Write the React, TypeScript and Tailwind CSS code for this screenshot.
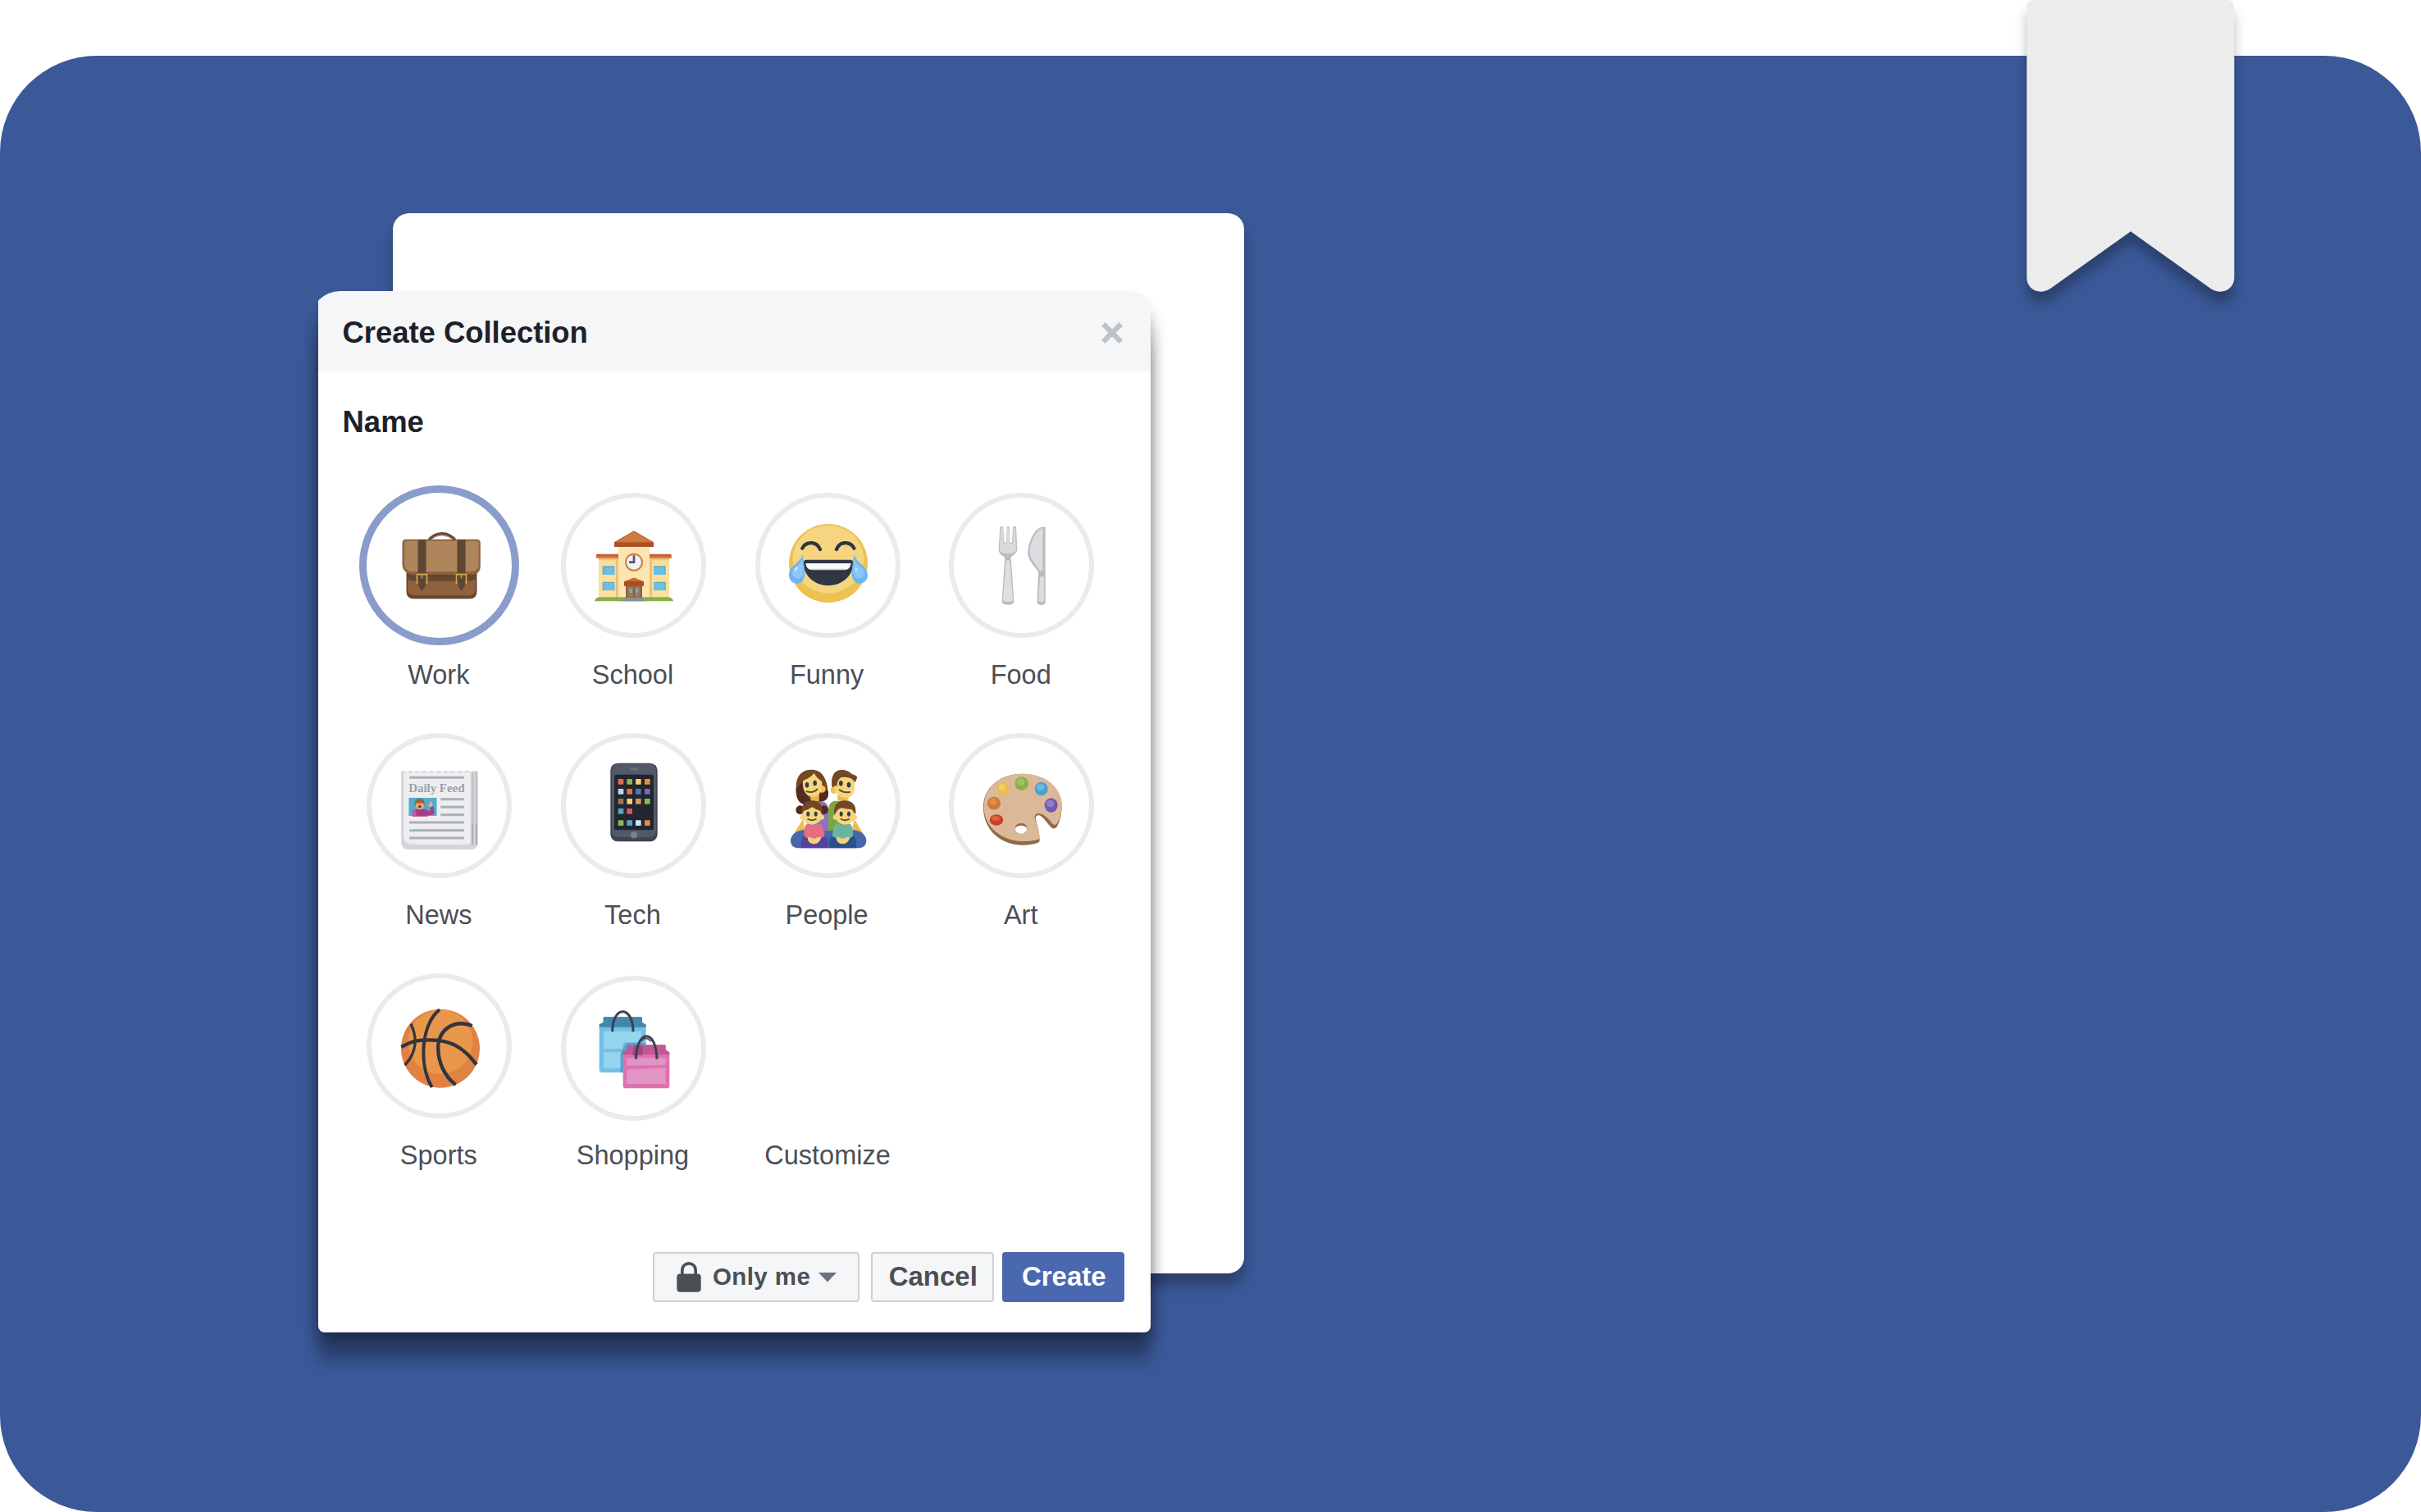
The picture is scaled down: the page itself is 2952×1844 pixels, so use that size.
import React from "react";

type IconProps = { x: number; y: number; children: React.ReactNode };

// Each drawing uses a 300-unit square around its circle's centre, shown at 100px.
function Emoji({ x, y, children }: IconProps) {
  return (
    <svg
      className="h-[100px] w-[100px] overflow-visible"
      viewBox={`${x - 150} ${y - 150} 300 300`}
      fill="none"
      aria-hidden="true"
    >
      {children}
    </svg>
  );
}

function Briefcase() {
  return (
    <Emoji x={345.5} y={358}>
      <path d="M303 268C330 232 376 230 406 268" stroke="#6b4a33" strokeWidth="10" />
      <path d="M311 263C336 243 370 243 397 263" stroke="#8d6e53" strokeWidth="2" />
      <path d="M224 370h258v82q0 27-27 27h-204q-27 0-27-27z" fill="#654630" />
      <path d="M229 375h248v68q0 24-24 24h-200q-24 0-24-24z" fill="#90613f" />
      <path d="M226 376h254v26q-12 12-32 12H258q-22 0-32-12z" fill="#654630" />
      <path d="M209 275q0-14 14-14h258q14 0 14 14v84q0 31-31 31H243q-34-6-34-37z" fill="#8d6340" />
      <path d="M217 275q0-8 9-8h252q10 0 10 8v78q0 26-24 26H243q-26-3-26-28z" fill="#af855b" />
      {[281, 425].map((cx) => (
        <g key={cx}>
          <path d={`M${cx - 15} 262h30v123h-30z`} fill="#5d4632" />
          <path d={`M${cx - 13} 392h26v40l-13 19-13-19z`} fill="#5d4632" />
          <path d={`M${cx - 18} 424v-34h36v34`} stroke="#d3a548" strokeWidth="5" />
          <path d={`M${cx} 388v16`} stroke="#c8963f" strokeWidth="5" />
        </g>
      ))}
    </Emoji>
  );
}

function School() {
  return (
    <Emoji x={1056} y={358}>
      <path d="M930 330h258v146H930z" fill="#fae09a" />
      <path d="M993 330h10v146h-10zM1115 330h10v146h-10z" fill="#edc07c" />
      <path d="M1002 285h114v191h-114z" fill="#fce5ae" />
      <path d="M930 330h64v8h-64zM1124 330h64v8h-64z" fill="#efc37c" />
      <path d="M921 318q0-3 3-3h78v16h-81zM1116 315h77q3 0 3 3v13h-80z" fill="#c4622f" />
      <path d="M921 324h81v7h-81zM1116 324h80v7h-80z" fill="#d28050" />
      <path d="M987 272l70-41h4l70 41v17H987z" fill="#ad5126" />
      <path d="M991 272l66-38h4l66 38z" fill="#cf7b3f" />
      <circle cx="1059" cy="345" r="33" fill="#cd7c4c" />
      <circle cx="1059" cy="345" r="27" fill="#f1f2f7" />
      <path d="M1059 320v25h-18" stroke="#4f596b" strokeWidth="8" />
      {[359, 417].map((y) => (
        <g key={y}>
          <path d={`M944 ${y}h44v31h-44zM1131 ${y}h44v31h-44z`} fill="#5aa8cc" />
          <path d={`M948 ${y + 4}h40v27h-40zM1131 ${y + 4}h40v27h-40z`} fill="#6cc0e4" />
        </g>
      ))}
      <path d="M915 488q3-15 20-15h248q17 0 20 15z" fill="#86b04a" />
      <path d="M1016 488q4-10 16-14h54q12 4 16 14z" fill="#8b919b" />
      <path d="M1029 430h60v45h-60z" fill="#8a6142" />
      <path d="M1036 434h20v40h-20zM1062 434h20v40h-20z" fill="#a2764d" />
      <path d="M1043 441h10v16h-10zM1065 441h10v16h-10z" fill="#69aec2" />
      <path d="M1023 416l34-14h4l34 14v16h-72z" fill="#a94c25" />
      <path d="M1026 415l32-13 32 13z" fill="#c66c38" />
    </Emoji>
  );
}

function Joy() {
  return (
    <Emoji x={326} y={358}>
      <circle cx="329" cy="349" r="144" fill="#edc252" />
      <ellipse cx="329" cy="334" rx="130" ry="124" fill="#f5d580" />
      <path d="M234 294c11-23 50-30 65 4M423 294c-11-23-50-30-64 4" stroke="#2e3542" strokeWidth="13" strokeLinecap="round" />
      <path d="M248 336h161q11 0 11 12c0 44-39 82-91 82s-91-38-91-82q0-12 10-12z" fill="#2f3644" />
      <path d="M246 349h166c-2 16-10 24-23 24H269c-13 0-21-8-23-24z" fill="#f7f8fa" />
      <path d="M264 369h130l-6 5H270z" fill="#c9ccd1" />
      <g>
        <path d="M236 317c1 28 7 42 7 67 0 24-11 39-28 39s-30-12-30-31c0-32 37-41 51-75z" fill="#6fb4f0" />
        <path d="M234 334c1 20 4 32 4 48 0 14-9 22-21 22s-20-8-20-20c0-20 26-25 37-50z" fill="#8cc5f7" />
        <ellipse cx="211" cy="370" rx="5" ry="9" fill="#c5e4fb" transform="rotate(35 211 370)" />
      </g>
      <g transform="translate(658 0) scale(-1 1)">
        <path d="M236 317c1 28 7 42 7 67 0 24-11 39-28 39s-30-12-30-31c0-32 37-41 51-75z" fill="#6fb4f0" />
        <path d="M234 334c1 20 4 32 4 48 0 14-9 22-21 22s-20-8-20-20c0-20 26-25 37-50z" fill="#8cc5f7" />
        <ellipse cx="227" cy="371" rx="4" ry="8" fill="#c5e4fb" />
      </g>
    </Emoji>
  );
}

function Cutlery() {
  return (
    <Emoji x={1036} y={358}>
      <path d="M956 215h12l3 58h8l2-58h9l2 58h8l3-58h12l4 83c-1 12-12 20-22 27-3 5-1 10 0 14l10 148c0 10-8 14-22 14s-22-4-22-14l10-148c1-5 2-10-2-14-12-7-20-15-20-27z" fill="#b9bcc0" />
      <path d="M959 219h7l3 58h11l2-58h6l3 58h12l3-58h6l3 78c0 12-14 17-30 17s-30-5-30-17z" fill="#d9dadd" />
      <path d="M978 340q7-6 14 0l11 140c0 8-8 10-18 10s-18-2-18-10z" fill="#dedfe2" />
      <path d="M1122 216v274c0 8-4 11-15 11s-15-4-15-12l4-110c-16-20-38-45-38-66 0-45 28-97 54-97z" fill="#b9bcc0" />
      <path d="M1112 220v155q-5 4-11 0c-14-20-36-45-36-65 0-38 24-84 47-90z" fill="#dcdde0" />
      <path d="M1102 398h15v86q-3 7-10 7t-10-7z" fill="#dcdde0" />
    </Emoji>
  );
}

function Newspaper() {
  return (
    <Emoji x={345.5} y={336}>
      <path d="M205 209l7-3 12 5 13-5 13 5 13-5 13 5 13-5 13 5 13-5 13 5 13-5 13 5 13-5 13 5 13-5 13 5 13-5 13 5 14-5 14 5 13-5 13 5v260q-3 22-22 24H229q-22-3-24-24z" fill="#d4d5d8" />
      <path d="M214 214l10-3 13 3 13-3 13 3 13-3 13 3 13-3 13 3 13-3 13 3 13-3 13 3 13-3 13 3 13-3 13 3 13-3 13 3 13-3v254q0 11-8 11H243q-26-2-29-30z" fill="#edeef0" />
      <path d="M467 212v266M480 210v268" stroke="#bfc1c5" strokeWidth="6" />
      <path d="M466 400v78M480 400v78" stroke="#abadb2" strokeWidth="5" />
      <path d="M235 232h200M349 311h86M349 340h86M349 368h86M235 396h200M235 425h200M235 453h200" stroke="#acafb7" strokeWidth="9" />
      <text
        x="232"
        y="284"
        textLength="205"
        lengthAdjust="spacingAndGlyphs"
        fontFamily="Liberation Serif, serif"
        fontWeight="700"
        fontSize="46"
        fill="#9c9fa8"
      >
        Daily Feed
      </text>
      <path d="M233 306h102v66H233z" fill="#56a9cc" />
      <path d="M246 374v-15q3-10 19-11h30l14 8 4-18h10l3 24q-2 8-24 8v4z" fill="#a83c81" />
      <path d="M246 374v-15q4-8 12-8l4 23z" fill="#c954a0" />
      <circle cx="273" cy="333" r="16" fill="#e0a87c" />
      <path d="M256 336c-5-19 4-28 17-28s20 10 17 27l-6-10q-12 3-22-1z" fill="#98663b" />
      <circle cx="273" cy="338" r="5" fill="#6b2f2c" />
      <path d="M303 328l6 3 4-13 6 6v13l-10 3z" fill="#e8b48c" />
    </Emoji>
  );
}

const APP_TILES: [number, number, string][] = [
  [1011, 248, "#e8694a"],
  [1043, 248, "#8ab850"],
  [1075, 248, "#f2cf70"],
  [1108, 248, "#ea8e3e"],
  [1011, 284, "#c0d3f8"],
  [1043, 284, "#ea6e45"],
  [1075, 284, "#5673b4"],
  [1108, 284, "#8067ba"],
  [1011, 320, "#9b7650"],
  [1043, 320, "#f3d074"],
  [1075, 320, "#d09a68"],
  [1108, 320, "#8ab850"],
  [1011, 356, "#52a5cd"],
  [1043, 356, "#e0535e"],
  [1011, 399, "#8ab850"],
  [1043, 399, "#52a5cd"],
  [1075, 399, "#c8e9f5"],
  [1108, 399, "#ea8e3e"],
];

function Phone() {
  return (
    <Emoji x={1056} y={337}>
      <rect x="973" y="180" width="172" height="287" rx="27" fill="#3f4555" />
      <rect x="978" y="184" width="162" height="267" rx="24" fill="#535969" />
      <rect x="987" y="222" width="144" height="203" rx="7" fill="#22262f" />
      <rect x="1045" y="196" width="29" height="12" rx="4" fill="#656b79" />
      <circle cx="1059" cy="443" r="12" fill="#7c818e" />
      {APP_TILES.map(([x, y, color]) => (
        <rect key={`${x}-${y}`} x={x - 10} y={y - 10} width="20" height="20" rx="2" fill={color} />
      ))}
    </Emoji>
  );
}

function Family() {
  return (
    <Emoji x={326} y={337}>
      <path d="M236 385l-36 58 50 8zM424 385l36 58-50 8z" fill="#eebf4e" />
      <path d="M252 318h50q27 4 27 32v84h-77z" fill="#8a72c4" />
      <path d="M406 318h-50q-27 4-27 32v84h77z" fill="#7da642" />
      <path d="M235 425q50-4 94 4 44-8 94-4c28 4 45 20 45 38 0 20-14 28-30 28H221c-16 0-30-8-30-28 0-18 18-35 44-38z" fill="#4767ab" />
      <path d="M211 262c2-34 18-58 57-58 35 0 58 28 61 90 0 18-12 27-31 26l-58 11c-22-8-31-24-29-69z" fill="#744725" />
      <path d="M211 275c0 32 8 50 29 56l26-9-20-34-10-42zM329 284c1 24-10 36-31 36l-16-8 32-38z" fill="#55291f" />
      <path d="M262 290l34-10-1 38q-16 7-30 0z" fill="#e9b84a" />
      <ellipse cx="306" cy="275" rx="13" ry="13" fill="#f0c458" />
      <path d="M236 245q28-12 41-28 11 20 28 29c5 34-10 57-33 57-25 0-39-24-36-58z" fill="#f5d57e" />
      <path d="M363 286h40v26q-19 13-40 3z" fill="#e9b84a" />
      <ellipse cx="349" cy="278" rx="12" ry="14" fill="#f0c458" />
      <path d="M351 268c-2-38 20-52 39-49 27 0 36 18 36 48-2 27-14 40-34 40-24 0-38-15-41-39z" fill="#f5d57e" />
      <path d="M342 266c-4-40 8-61 38-61 16 0 27 7 36 16 9 2 14 5 19 11l-8 19q-12-24-50-19c-11 6-16 15-16 32q-8-4-14 5z" fill="#744725" />
      <g fill="#343c49">
        <ellipse cx="251" cy="260" rx="7" ry="10" />
        <ellipse cx="280" cy="253" rx="7" ry="10" />
        <ellipse cx="375" cy="254" rx="7" ry="10" />
        <ellipse cx="404" cy="260" rx="7" ry="10" />
      </g>
      <path d="M250 284q24 7 38-8M370 278q15 12 37 8" stroke="#5c4a32" strokeWidth="6" strokeLinecap="round" />
      <circle cx="226" cy="351" r="16" fill="#55291f" />
      <circle cx="313" cy="351" r="16" fill="#55291f" />
      <path d="M231 365c-3-33 14-48 39-48s41 16 37 48z" fill="#744725" />
      <path d="M350 365c-2-33 14-48 40-48 25 0 42 15 39 48z" fill="#744725" />
      <g fill="#f5d57e">
        <ellipse cx="269" cy="373" rx="36" ry="32" />
        <ellipse cx="390" cy="373" rx="36" ry="32" />
        <circle cx="234" cy="378" r="9" />
        <circle cx="305" cy="378" r="9" />
        <circle cx="355" cy="378" r="9" />
        <circle cx="425" cy="378" r="9" />
      </g>
      <path d="M236 356q20-4 34-16 14 12 33 16l-5-25-25-9-28 7zM357 357q10-12 21-13 28 8 47 4l-7-21-28-6-27 9z" fill="#744725" />
      <g fill="#343c49">
        <ellipse cx="255" cy="366" rx="6" ry="9" />
        <ellipse cx="283" cy="366" rx="6" ry="9" />
        <ellipse cx="376" cy="366" rx="6" ry="9" />
        <ellipse cx="404" cy="366" rx="6" ry="9" />
      </g>
      <path d="M255 385q14 8 28 0M376 385q14 8 28 0" stroke="#5c4a32" strokeWidth="6" strokeLinecap="round" />
      <path d="M248 403q25 8 52-2 13 14 15 52l-36 12-39-12q-1-36 8-50z" fill="#e56f80" />
      <path d="M357 401q28 10 54 2 10 18 8 50l-39 12-36-12q2-38 13-52z" fill="#6bb4a4" />
      <path d="M238 447q39-3 84 2 9 18 7 42H229q0-30 9-44z" fill="#56409a" />
      <path d="M339 449q45-5 84-2 9 14 9 44H332q-2-28 7-42z" fill="#28508b" />
      <path d="M241 440q0 10 9 14l28 4 28-4q9-4 9-12v-10h-74z" fill="#e56f80" />
      <path d="M345 440q0 10 9 14l28 4 28-4q9-4 9-12v-10h-74z" fill="#6bb4a4" />
      <path d="M257 450q11 2 20 7 10-6 22-7 6 4-1 14-8 12-21 12t-20-10q-7-10 0-16zM362 450q11 2 20 7 10-6 22-7 6 4-1 14-8 12-21 12t-20-10q-7-10 0-16z" fill="#f3d07b" />
    </Emoji>
  );
}

const PAINTS: [number, number, number, number, string, string][] = [
  [967, 274, 21, 24, "#eabd4c", "#f3cd67"],
  [1035, 255, 25, 25, "#89b14a", "#9cc462"],
  [1107, 274, 24, 25, "#519fc9", "#68bbe0"],
  [934, 327, 24, 24, "#d3763b", "#e38a47"],
  [1143, 334, 24, 26, "#7258b1", "#9080c8"],
  [943, 388, 25, 20, "#c5422a", "#dc6038"],
];

function Palette() {
  return (
    <Emoji x={1036} y={337}>
      <path fillRule="evenodd" d="M1038 219c82 0 144 50 144 118 0 30-8 59-17 74-6 10-16 11-24 2-15-18-28-38-42-42-10-1-15 6-12 17 4 17 14 40 14 76q-1 6-8 8c-20 6-40 9-58 8-80-2-140-58-140-138 0-73 61-123 143-123zM1033 399c-13 0-22 8-22 20s9 20 22 20 22-8 22-20-9-20-22-20z" fill="#8f6b4b" />
      <path fillRule="evenodd" d="M1038 219c82 0 144 50 144 115 0 26-7 51-17 66-5 8-12 8-19 0-14-18-29-33-47-36-12-1-19 7-16 18 4 17 17 40 17 72q-1 4-7 6c-18 5-38 7-56 6-78-2-140-56-140-124 0-73 59-123 141-123zM1033 404c-13 0-22 7-22 17s9 18 22 18 22-8 22-18-9-17-22-17z" fill="#dbb998" />
      <path d="M1011 419c0-24 44-26 44 0-8-14-36-14-44 0z" fill="#8f6b4b" />
      {PAINTS.map(([cx, cy, rx, ry, dark, light]) => (
        <g key={cx}>
          <ellipse cx={cx} cy={cy} rx={rx} ry={ry} fill={dark} />
          <ellipse cx={cx - 3} cy={cy - 6} rx={rx * 0.6} ry={ry * 0.5} fill={light} />
        </g>
      ))}
    </Emoji>
  );
}

function Basketball() {
  return (
    <Emoji x={346} y={316}>
      <circle cx="349" cy="324" r="144" fill="#e08244" />
      <circle cx="349" cy="300" r="118" fill="#ea974c" />
      <g stroke="#30353e" strokeWidth="13">
        <path d="M206 319c38-22 58-26 104-26 72 0 120 22 171 90" />
        <path d="M241 234c24 50 22 104-22 151" strokeWidth="10" />
        <path d="M346 182c-66 50-78 200-28 284" strokeWidth="12" />
        <path d="M465 241c-60-24-119 8-124 72-3 60 24 114 64 144" />
      </g>
    </Emoji>
  );
}

function ShoppingBags() {
  return (
    <Emoji x={1057} y={326}>
      <path d="M933 238l15-8v-17q0-3 4-3h134q4 0 4 3v17l14 8v72l-84 103h-77q-8 0-10-9z" fill="#71c1e6" />
      <path d="M933 247v-10l15-8v-16q0-3 4-3h134q4 0 4 3v16l14 10v8z" fill="#4288ac" />
      <path d="M949 262h138v40h-58q-10 0-10 10v14h-70zM949 339h64v58h-64z" fill="#95d5ef" />
      <path d="M1020 413v-72l14-11v-17h62l8-8h-60q-20 0-24 22-8 8-9 20v66z" fill="#4fa3cb" />
      <path d="M981 264c0-98 76-98 76 0" stroke="#38424f" strokeWidth="9" />
      <path d="M1020 340l14-9v-15q0-4 4-4h134q4 0 4 4v15l14 9v122q0 9-9 9h-152q-9 0-9-9z" fill="#dd72b2" />
      <path d="M1020 348v-9l14-9v-14q0-4 4-4h134q4 0 4 4v14l14 9v9z" fill="#c25795" />
      <path d="M1034 360h142v25l-142 3zM1034 402l142-6v59h-142z" fill="#e294c3" />
      <path d="M1062 313h30v36h-38z" fill="#a24580" />
      <path d="M1067 364c4-112 74-112 77 0" stroke="#38424f" strokeWidth="9" />
      <path d="M1086 300q18-24 36 0" stroke="#4a5160" strokeWidth="5" />
    </Emoji>
  );
}

type Category = { name: string; icon: React.ReactNode; selected?: boolean; nudge?: boolean };

const CATEGORIES: Category[] = [
  { name: "Work", icon: <Briefcase />, selected: true },
  { name: "School", icon: <School /> },
  { name: "Funny", icon: <Joy /> },
  { name: "Food", icon: <Cutlery /> },
  { name: "News", icon: <Newspaper /> },
  { name: "Tech", icon: <Phone /> },
  { name: "People", icon: <Family /> },
  { name: "Art", icon: <Palette /> },
  { name: "Sports", icon: <Basketball /> },
  { name: "Shopping", icon: <ShoppingBags />, nudge: true },
  { name: "Customize", icon: null },
];

function CategoryItem({ name, icon, selected, nudge }: Category) {
  const ring = selected
    ? "h-[195px] w-[195px] border-[9px] border-[#8a9ccb]"
    : "h-[177px] w-[177px] border-[6px] border-[#e9ebee]";
  return (
    <div className="flex h-[293px] flex-col items-center">
      <div className={nudge ? "flex h-[195px] items-center pt-[6px]" : "flex h-[195px] items-center"}>
        {icon && <div className={`flex shrink-0 items-center justify-center rounded-full ${ring}`}>{icon}</div>}
      </div>
      <span
        className={
          icon
            ? "mt-4 -ml-[2px] text-[32.5px] leading-[41px] text-[#4b4f56]"
            : "mt-4 text-[32.5px] leading-[41px] text-[#4b4f56]"
        }
      >
        {name}
      </span>
    </div>
  );
}

function Ribbon() {
  return (
    <svg
      className="absolute top-0 left-[2471px] h-[356px] w-[254px] overflow-visible [filter:drop-shadow(0_14px_7px_rgba(0,0,0,0.27))]"
      viewBox="0 0 254 356"
      aria-hidden="true"
    >
      <path
        d="M0.3 9Q0.3 0 9 0H244.600Q253.300 0 253.300 9V338.500C253.300 353 238 360.500 225 352.300L127 282.200L28.600 352.300C15.600 360.500 0.300 353 0.300 338.500Z"
        fill="#ececec"
      />
    </svg>
  );
}

export default function App() {
  return (
    <main className="relative h-[1844px] w-[2952px] overflow-hidden bg-white pt-[68px] font-['Liberation_Sans',Arial,sans-serif]">
      <div className="relative h-[1776px] rounded-[118px] bg-[#3b5998] pt-[287px] pl-[387.5px]">
        <div className="absolute top-[192px] left-[478.5px] h-[1292.500px] w-[1038px] rounded-[20px] bg-white shadow-[0_15px_16px_rgba(0,0,0,0.28)]" />

        <section className="relative flex h-[1269.500px] w-[1015px] flex-col">
          <div className="absolute inset-x-0 top-[12px] bottom-0 rounded-t-[28px] rounded-b-[8px] shadow-[0_8px_20px_rgba(0,0,0,0.32),0_36px_18px_rgba(0,0,0,0.25),0_14px_20px_rgba(0,0,0,0.1)]" />
          <header className="relative h-[98px] shrink-0 overflow-hidden">
            <div className="-mx-[10px] flex h-full items-center justify-between rounded-t-[37px] bg-[#f5f6f7] pr-[43.500px] pl-[40px]">
              <h1 className="mt-[3px] text-[36.5px] leading-10 font-bold tracking-[-0.05px] text-[#1d2129]">Create Collection</h1>
              <svg className="mt-[3px] h-[26px] w-[26px]" viewBox="0 0 25 25" aria-hidden="true">
                <path d="M2.200 2.200L22.800 22.800M22.800 2.200L2.200 22.800" stroke="#bec2c9" strokeWidth="6" />
              </svg>
            </div>
          </header>

          <div className="relative flex flex-1 flex-col rounded-b-[8px] bg-white pt-[42px]">
            <h2 className="pl-[30px] text-[36.5px] leading-10 font-bold text-[#1d2129]">Name</h2>
            <div className="mt-[57px] ml-[30px] grid w-[946.500px] grid-cols-4">
              {CATEGORIES.map((category) => (
                <CategoryItem key={category.name} {...category} />
              ))}
            </div>
            <footer className="mt-auto mb-[37px] flex h-[61px] justify-end pr-[31.500px] text-[33px] font-bold text-[#4b4f56]">
              <button className="flex h-[61px] w-[252px] items-center rounded-[4px] border-2 border-[#ccd0d5] bg-[#f5f6f7] pl-[27px]">
                <svg className="mt-[1px] h-[37px] w-[30px]" viewBox="0 0 30 37" aria-hidden="true">
                  <path d="M6.800 17V10.500C6.800 -1 23.200 -1 23.200 10.500V17" fill="none" stroke="#4b4f56" strokeWidth="3.600" />
                  <rect x="0.300" y="14.500" width="29.400" height="22.300" rx="4" fill="#4b4f56" />
                </svg>
                <span className="ml-[14.500px] text-[29.500px] tracking-[0.4px]">Only me</span>
                <svg className="ml-[10px] h-[13px] w-[22px]" viewBox="0 0 22 13" aria-hidden="true">
                  <path d="M0 1H22L11 12.500Z" fill="#6a7180" />
                </svg>
              </button>
              <button className="ml-[14.500px] h-[61px] w-[149.500px] rounded-[4px] border-2 border-[#ccd0d5] bg-[#f5f6f7] pl-[2px]">
                Cancel
              </button>
              <button className="ml-[10px] h-[61px] w-[149.500px] rounded-[4px] bg-[#4a68af] pl-[2px] text-white">Create</button>
            </footer>
          </div>
        </section>
      </div>
      <Ribbon />
    </main>
  );
}
